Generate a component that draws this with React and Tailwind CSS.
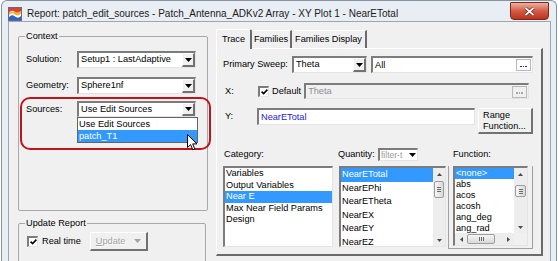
import React from 'react';

// classic 3D edges
const sunken =
  'border-t-2 border-l-2 border-r border-b border-t-[#7c7c7c] border-l-[#7c7c7c] border-r-[#e4e4e4] border-b-[#e4e4e4]';
const raised =
  'border-t border-l border-r-2 border-b-2 border-t-white border-l-white border-r-[#727272] border-b-[#727272]';

const Tri = ({ dir = 'down', color = '#000' }) => {
  const d = {
    down: 'M0 0H7L3.5 4Z',
    up: 'M0 4H7L3.5 0Z',
  }[dir];
  return (
    <svg width="7" height="4" viewBox="0 0 7 4">
      <path d={d} fill={color} />
    </svg>
  );
};

const SmallArrow = ({ dir }) => {
  const d = {
    up: 'M0 3H5L2.5 0Z',
    down: 'M0 0H5L2.5 3Z',
    left: 'M3 0V5L0 2.5Z',
    right: 'M0 0V5L3 2.5Z',
  }[dir];
  const horiz = dir === 'left' || dir === 'right';
  return (
    <svg width={horiz ? 3 : 5} height={horiz ? 5 : 3} viewBox={horiz ? '0 0 3 5' : '0 0 5 3'}>
      <path d={d} fill="#4a4a4a" />
    </svg>
  );
};

const Combo = ({ className, text }) => (
  <div className={`flex items-center bg-white ${sunken} ${className}`}>
    <span className="flex-1 pl-[2px] truncate leading-none">{text}</span>
    <div className={`h-full w-[13px] flex items-center justify-center bg-[#f0f0f0] ${raised}`}>
      <Tri />
    </div>
  </div>
);

const Check = () => (
  <div className={`w-[11px] h-[11px] bg-white flex items-center justify-center ${sunken}`}>
    <svg width="7" height="6" viewBox="0 0 7 6">
      <path d="M0.6 2.6L2.6 4.6L6.4 0.6" stroke="#000" strokeWidth="1.6" fill="none" />
    </svg>
  </div>
);

// small "..." browse button inside a text box
const DotsButton = ({ disabled }) => (
  <div
    className={`w-[15px] h-[12px] mr-[1px] flex items-end justify-center gap-[1px] pb-[3px] border border-[#b9b9b9] ${
      disabled ? 'bg-[#f0f0f0]' : 'bg-white'
    }`}
  >
    {[0, 1, 2].map((i) => (
      <div key={i} className={`w-[1.5px] h-[1.5px] ${disabled ? 'bg-[#a8a8a8]' : 'bg-[#2a2ad0]'}`} />
    ))}
  </div>
);

const Thumb = ({ className, horizontal }) => (
  <div
    className={`border border-[#9c9c9c] rounded-[2px] flex items-center justify-center ${
      horizontal ? 'bg-linear-to-b' : 'bg-linear-to-r'
    } from-[#f6f6f6] to-[#d9d9d9] ${className}`}
  >
    {horizontal ? (
      <div className="flex gap-[1px]">
        <div className="w-[1px] h-[4px] bg-[#6a6a6a]" />
        <div className="w-[1px] h-[4px] bg-[#6a6a6a]" />
        <div className="w-[1px] h-[4px] bg-[#6a6a6a]" />
      </div>
    ) : (
      <div className="flex flex-col gap-[1px]">
        <div className="w-[4px] h-[1px] bg-[#6a6a6a]" />
        <div className="w-[4px] h-[1px] bg-[#6a6a6a]" />
        <div className="w-[4px] h-[1px] bg-[#6a6a6a]" />
      </div>
    )}
  </div>
);

const categories = ['Variables', 'Output Variables', 'Near E', 'Max Near Field Params', 'Design'];
const quantities = ['NearETotal', 'NearEPhi', 'NearETheta', 'NearEX', 'NearEY', 'NearEZ'];
const functions = ['<none>', 'abs', 'acos', 'acosh', 'ang_deg', 'ang_rad'];

const AppIcon = () => (
  <svg width="14" height="14" viewBox="0 0 14 14">
    <rect x="0.5" y="0.5" width="13" height="13" fill="#fff" stroke="#5a6b8c" />
    <path d="M1 6Q4 2 7 5T13 4V1H1Z" fill="#e0402a" />
    <path d="M1 8Q4 5 7 7.5T13 6.5V4Q10 6 7 5T1 6Z" fill="#f5b030" />
    <path d="M1 13V10Q4 7 7 9.5T13 9V13Z" fill="#3162c4" />
  </svg>
);

const Cursor = () => (
  <svg width="11" height="17" viewBox="0 0 11 17">
    <path
      d="M0.5 0.5V13.5L3.6 10.6L5.8 15.8L7.8 15L5.7 9.9H10Z"
      fill="#fff"
      stroke="#000"
      strokeWidth="1"
      strokeLinejoin="round"
    />
  </svg>
);

export default function App() {
  return (
    <div className="relative w-[558px] h-[261px] overflow-hidden bg-white font-['Liberation_Sans',Arial,sans-serif] text-[9.2px] leading-[11px] text-black">
      <div className="ml-[1px] w-[556px] h-[261px] border-t border-l border-r border-[#8593a3] rounded-t-[6px] bg-[#e9eef4] flex flex-col">
        {/* title bar */}
        <div className="h-[22px] flex items-start pl-[6px] pr-[7px]">
          <div className="mt-[6px]">
            <AppIcon />
          </div>
          <span className="ml-[5px] mt-[7px] text-[10px] leading-[12px] text-[#1a1a1a]">
            Report: patch_edit_sources - Patch_Antenna_ADKv2 Array - XY Plot 1 - NearETotal
          </span>
          <div className="ml-auto mt-[1px] w-[39px] h-[18px] rounded-b-[4px] rounded-t-[1px] border border-[#7b2a1e] bg-linear-to-b from-[#eab0a0] via-[#d35a44] to-[#c0301c] flex items-center justify-center">
            <svg width="11" height="9" viewBox="0 0 11 9">
              <path d="M1.5 1L9.5 8M9.5 1L1.5 8" stroke="#5a1a10" strokeWidth="3" />
              <path d="M1.5 1L9.5 8M9.5 1L1.5 8" stroke="#fff" strokeWidth="1.7" />
            </svg>
          </div>
        </div>

        {/* dialog body */}
        <div className="ml-[6px] w-[543px] flex-1 border border-[#9aa6b3] bg-[#f0f0f0] flex">
          {/* left column */}
          <div className="w-[207px] pt-[9px] pl-[9px]">
            <fieldset className="w-[190px] h-[180px] border border-[#a8a8a8] rounded-[2px]">
              <legend className="ml-[6px] px-[1px] leading-[11px]">Context</legend>
              <div className="mt-[9px] flex items-center">
                <span className="w-[58px] pl-[7px]">Solution:</span>
                <Combo className="w-[119px] h-[17px]" text="Setup1 : LastAdaptive" />
              </div>
              <div className="mt-[9px] flex items-center">
                <span className="w-[58px] pl-[7px]">Geometry:</span>
                <Combo className="w-[119px] h-[17px]" text="Sphere1nf" />
              </div>
              <div className="mt-[7px] flex items-center">
                <span className="w-[58px] pl-[7px]">Sources:</span>
                <Combo className="w-[119px] h-[16px]" text="Use Edit Sources" />
              </div>
              <div className="ml-[58px] w-[121px] h-[26px] bg-white border border-[#646464]">
                <div className="h-[12px] leading-[12px] pl-[1px]">Use Edit Sources</div>
                <div className="h-[12px] leading-[12px] pl-[1px] bg-[#3399ff] text-white">patch_T1</div>
              </div>
            </fieldset>

            <fieldset className="mt-[7px] w-[188px] h-[60px] border border-[#a8a8a8] rounded-[2px]">
              <legend className="ml-[6px] px-[1px] leading-[11px]">Update Report</legend>
              <div className="mt-[3px] pl-[8px] flex items-center">
                <Check />
                <span className="ml-[4px]">Real time</span>
                <div className={`ml-[9px] w-[58px] h-[19px] bg-[#f0f0f0] flex items-center pl-[5px] ${raised}`}>
                  <span className="text-[#a3a3a3] [text-shadow:1px_1px_0_#fff]">
                    <span className="underline">U</span>pdate
                  </span>
                  <span className="ml-[9px]">
                    <Tri color="#a3a3a3" />
                  </span>
                </div>
              </div>
            </fieldset>
          </div>

          {/* right column: tabs */}
          <div className="pt-[7px]">
            <div className="h-[19px] flex items-end">
              <div className="relative z-10 -mb-[1px] h-[20px] w-[36px] bg-[#f0f0f0] border-t border-l border-r-2 border-t-white border-l-white border-r-[#6a6a6a] rounded-t-[2px] flex items-center justify-center">
                Trace
              </div>
              <div className="h-[18px] w-[40px] border-t border-r-2 border-t-white border-r-[#6a6a6a] flex items-center justify-center">
                Families
              </div>
              <div className="h-[18px] w-[75px] border-t border-r-2 border-t-white border-r-[#6a6a6a] flex items-center justify-center">
                Families Display
              </div>
            </div>

            <div className="w-[327px] h-[208px] bg-[#f0f0f0] border-t border-l border-r-2 border-b-2 border-t-white border-l-white border-r-[#6a6a6a] border-b-[#6a6a6a] pt-[7px] pl-[6px]">
              {/* primary sweep */}
              <div className="h-[17px] flex items-center">
                <span className="w-[69px]">Primary Sweep:</span>
                <Combo className="w-[75px] h-[17px]" text="Theta" />
                <div className={`ml-[4px] w-[162px] h-[17px] bg-white flex items-center ${sunken}`}>
                  <span className="flex-1 pl-[2px]">All</span>
                  <DotsButton />
                </div>
              </div>

              {/* X */}
              <div className="mt-[10px] h-[16px] flex items-center">
                <span className="w-[35px] pl-[2px]">X:</span>
                <Check />
                <span className="ml-[3px]">Default</span>
                <div className={`ml-[3px] w-[225px] h-[16px] bg-[#f0f0f0] flex items-center ${sunken}`}>
                  <span className="flex-1 pl-[2px] text-[#8f8f8f]">Theta</span>
                  <DotsButton disabled />
                </div>
              </div>

              {/* Y */}
              <div className="mt-[9px] flex items-start">
                <span className="w-[34px] pl-[2px] mt-[3px]">Y:</span>
                <div className={`w-[218px] h-[17px] bg-white flex items-center ${sunken}`}>
                  <span className="pl-[2px] text-[#2323d6]">NearETotal</span>
                </div>
                <div className={`ml-[3px] w-[55px] h-[26px] bg-[#f0f0f0] flex flex-col justify-center pl-[4px] ${raised}`}>
                  <span>Range</span>
                  <span>Function...</span>
                </div>
              </div>

              {/* list labels */}
              <div className="mt-[14px] h-[13px] flex items-center">
                <span className="w-[115px] pl-[1px]">Category:</span>
                <span className="w-[40px]">Quantity:</span>
                <div className={`w-[40px] h-[13px] bg-white flex items-center ${sunken}`}>
                  <span className="flex-1 pl-[1px] text-[#9a9a9a] text-[8.5px] leading-none overflow-hidden whitespace-nowrap">
                    filter-t
                  </span>
                  <div className="w-[9px] flex justify-center">
                    <Tri />
                  </div>
                </div>
                <span className="ml-[35px]">Function:</span>
              </div>

              {/* lists */}
              <div className="mt-[5px] flex items-start">
                <div className={`w-[110px] h-[81px] bg-white ${sunken}`}>
                  {categories.map((c) => (
                    <div
                      key={c}
                      className={`h-[11.5px] leading-[11.5px] pl-[1px] whitespace-nowrap ${
                        c === 'Near E' ? 'bg-[#3399ff] text-white' : ''
                      }`}
                    >
                      {c}
                    </div>
                  ))}
                </div>

                <div className={`ml-[6px] w-[107px] h-[81px] bg-white flex ${sunken}`}>
                  <div className="flex-1 overflow-hidden">
                    {quantities.map((q, i) => (
                      <div
                        key={q}
                        className={`h-[13.5px] leading-[13.5px] pl-[1px] ${
                          i === 0 ? 'bg-[#3399ff] text-white' : ''
                        }`}
                      >
                        {q}
                      </div>
                    ))}
                  </div>
                  <div className="w-[12px] h-full bg-[#ededed] flex flex-col">
                    <div className="h-[12px] flex items-center justify-center">
                      <SmallArrow dir="up" />
                    </div>
                    <Thumb className="mt-[1px] mx-[1px] h-[17px]" />
                    <div className="flex-1" />
                    <div className="h-[12px] flex items-center justify-center">
                      <SmallArrow dir="down" />
                    </div>
                  </div>
                </div>

                <div className="ml-[2px] w-[85px] h-[83px] border-l border-r border-b border-[#a0a0a0] pl-[4px] pt-0">
                  <div className={`w-[75px] h-[80px] bg-white flex flex-col ${sunken}`}>
                    <div className="flex-1 flex min-h-0">
                      <div className="flex-1 overflow-hidden">
                        {functions.map((f, i) => (
                          <div
                            key={f}
                            className={`h-[11px] leading-[11px] pl-[1px] ${
                              i === 0 ? 'bg-[#3399ff] text-white' : ''
                            }`}
                          >
                            {f}
                          </div>
                        ))}
                      </div>
                      <div className="w-[13px] bg-[#ededed] flex flex-col">
                        <div className="h-[12px] flex items-center justify-center">
                          <SmallArrow dir="up" />
                        </div>
                        <Thumb className="mt-[5px] mx-[1px] h-[12px]" />
                        <div className="flex-1" />
                        <div className="h-[12px] flex items-center justify-center">
                          <SmallArrow dir="down" />
                        </div>
                      </div>
                    </div>
                    <div className="h-[12px] flex bg-[#ededed]">
                      <div className="w-[12px] flex items-center justify-center">
                        <SmallArrow dir="left" />
                      </div>
                      <Thumb horizontal className="w-[28px] my-[1px]" />
                      <div className="flex-1" />
                      <div className="w-[12px] flex items-center justify-center">
                        <SmallArrow dir="right" />
                      </div>
                      <div className="w-[13px] bg-[#f0f0f0]" />
                    </div>
                  </div>
                </div>
              </div>
            </div>
          </div>
        </div>
      </div>

      {/* annotation + pointer overlays */}
      <div className="absolute left-[20px] top-[97px] w-[191px] h-[53px] border-2 border-[#c0141c] rounded-[10px]" />
      <div className="absolute left-[187px] top-[134px]">
        <Cursor />
      </div>
    </div>
  );
}
